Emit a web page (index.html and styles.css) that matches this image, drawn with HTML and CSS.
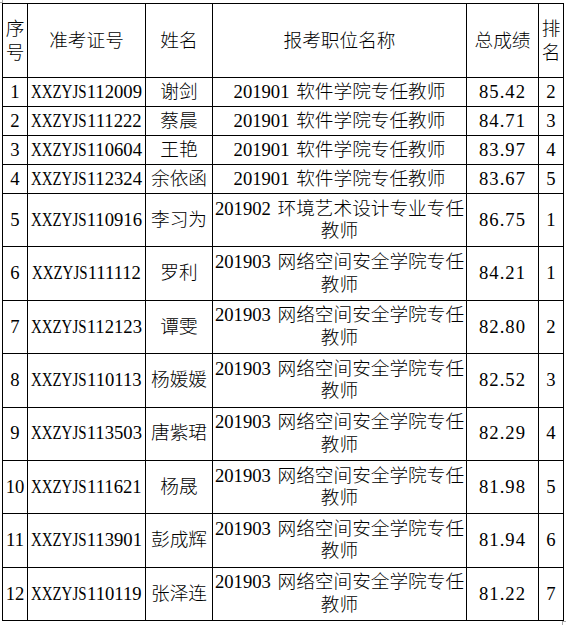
FILE: index.html
```html
<!DOCTYPE html>
<html lang="zh-CN">
<head>
<meta charset="utf-8">
<title>成绩排名</title>
<link rel="stylesheet" href="styles.css">
</head>
<body>
<span class="mark mark-tl"></span>
<table class="grid">
  <colgroup>
    <col class="c-no"><col class="c-id"><col class="c-name"><col class="c-post"><col class="c-score"><col class="c-rank">
  </colgroup>
  <thead>
    <tr class="head">
      <th>序号</th><th>准考证号</th><th>姓名</th><th>报考职位名称</th><th>总成绩</th><th>排名</th>
    </tr>
  </thead>
  <tbody>
    <tr class="one"><td>1</td><td><span class="pre">XXZYJS</span>112009</td><td>谢剑</td><td class="post">201901 软件学院专任教师</td><td class="score">85.42</td><td>2</td></tr>
    <tr class="one"><td>2</td><td><span class="pre">XXZYJS</span>111222</td><td>蔡晨</td><td class="post">201901 软件学院专任教师</td><td class="score">84.71</td><td>3</td></tr>
    <tr class="one"><td>3</td><td><span class="pre">XXZYJS</span>110604</td><td>王艳</td><td class="post">201901 软件学院专任教师</td><td class="score">83.97</td><td>4</td></tr>
    <tr class="one"><td>4</td><td><span class="pre">XXZYJS</span>112324</td><td>余依函</td><td class="post">201901 软件学院专任教师</td><td class="score">83.67</td><td>5</td></tr>
    <tr class="two"><td>5</td><td><span class="pre">XXZYJS</span>110916</td><td>李习为</td><td class="post">201902 环境艺术设计专业专任教师</td><td class="score">86.75</td><td>1</td></tr>
    <tr class="two"><td>6</td><td><span class="pre">XXZYJS</span>111112</td><td>罗利</td><td class="post">201903 网络空间安全学院专任教师</td><td class="score">84.21</td><td>1</td></tr>
    <tr class="two"><td>7</td><td><span class="pre">XXZYJS</span>112123</td><td>谭雯</td><td class="post">201903 网络空间安全学院专任教师</td><td class="score">82.80</td><td>2</td></tr>
    <tr class="two"><td>8</td><td><span class="pre">XXZYJS</span>110113</td><td>杨媛媛</td><td class="post">201903 网络空间安全学院专任教师</td><td class="score">82.52</td><td>3</td></tr>
    <tr class="two"><td>9</td><td><span class="pre">XXZYJS</span>113503</td><td>唐紫珺</td><td class="post">201903 网络空间安全学院专任教师</td><td class="score">82.29</td><td>4</td></tr>
    <tr class="two"><td>10</td><td><span class="pre">XXZYJS</span>111621</td><td>杨晟</td><td class="post">201903 网络空间安全学院专任教师</td><td class="score">81.98</td><td>5</td></tr>
    <tr class="two"><td>11</td><td><span class="pre">XXZYJS</span>113901</td><td>彭成辉</td><td class="post">201903 网络空间安全学院专任教师</td><td class="score">81.94</td><td>6</td></tr>
    <tr class="two"><td>12</td><td><span class="pre">XXZYJS</span>110119</td><td>张泽连</td><td class="post">201903 网络空间安全学院专任教师</td><td class="score">81.22</td><td>7</td></tr>
  </tbody>
</table>
<span class="mark mark-br"></span>
</body>
</html>
```
FILE: styles.css
```css
html, body {
  margin: 0;
  padding: 0;
  background: #ffffff;
}

body {
  position: relative;
  width: 568px;
  height: 625px;
  overflow: hidden;
  color: #000000;
  font-family: "Liberation Serif", "Noto Sans CJK SC", serif;
}

.grid {
  margin: 3px 0 0 2px;
  border-collapse: separate;
  border-spacing: 0;
  table-layout: fixed;
  width: 562px;
  border-left: 1px solid #000;
  border-top: 1px solid #000;
}

.c-no { width: 25px; }
.c-id { width: 118px; }
.c-name { width: 67px; }
.c-post { width: 254px; }
.c-score { width: 72px; }
.c-rank { width: 25px; }

.grid th,
.grid td {
  box-sizing: border-box;
  padding: 0;
  border-right: 1px solid #000;
  border-bottom: 1px solid #000;
  text-align: center;
  vertical-align: middle;
  font-weight: 300;
  font-size: 18.67px;
  line-height: 22.5px;
  white-space: normal;
}

.grid th {
  line-height: 24px;
}

.head { height: 74px; }
.one { height: 29px; }
.two { height: 53.375px; }

.pre {
  display: inline-block;
  transform: scaleX(0.8);
  transform-origin: center;
  margin: 0 -6.9px;
}

.post {
  word-spacing: 2px;
}

.score {
  letter-spacing: 1px;
}

.mark {
  position: absolute;
  width: 3px;
  height: 3px;
}

.mark-tl {
  left: 0;
  top: 0;
  width: 2px;
  height: 2px;
  border-right: 1px solid #a8a8a8;
  border-bottom: 1px solid #a8a8a8;
}

.mark-br {
  left: 562px;
  top: 621px;
  border-left: 1px solid #a8a8a8;
  border-top: 1px solid #a8a8a8;
}
```
